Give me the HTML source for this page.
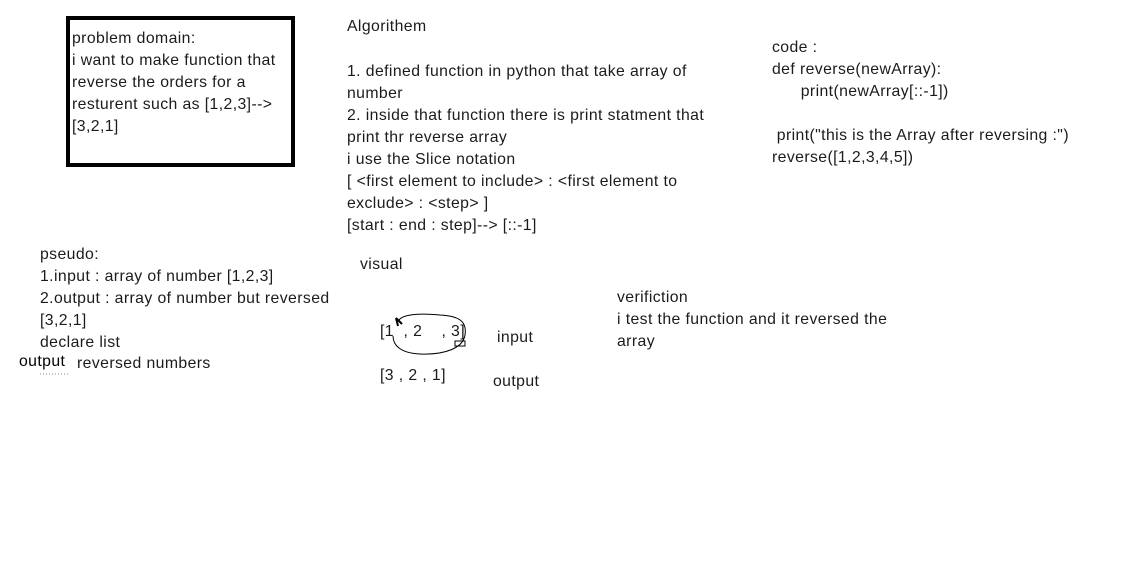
<!DOCTYPE html>
<html><head><style>
body{margin:0;width:1124px;height:580px;background:#fff;position:relative;overflow:hidden;font-family:"Liberation Sans",sans-serif;font-size:15.8px;letter-spacing:0.4px;color:#1b1b1b;}
.t{position:absolute;line-height:22px;white-space:pre;}
.box{position:absolute;left:66px;top:16px;width:221px;height:143px;border:4px solid #000;}
</style></head><body>
<div class="box"></div>
<div class="t" style="left:72px;top:28px">problem domain:
i want to make function that
reverse the orders for a
resturent such as [1,2,3]--&gt;
[3,2,1]</div>
<div class="t" style="left:347px;top:16px">Algorithem</div>
<div class="t" style="left:347px;top:61px">1. defined function in python that take array of
number
2. inside that function there is print statment that
print thr reverse array
i use the Slice notation
[ &lt;first element to include&gt; : &lt;first element to
exclude&gt; : &lt;step&gt; ]
[start : end : step]--&gt; [::-1]</div>
<div class="t" style="left:772px;top:37px">code :
def reverse(newArray):
      print(newArray[::-1])

 print("this is the Array after reversing :")
reverse([1,2,3,4,5])</div>
<div class="t" style="left:40px;top:244px">pseudo:
1.input : array of number [1,2,3]
2.output : array of number but reversed
[3,2,1]
declare list</div>
<div class="t" style="left:77px;top:353px">reversed numbers</div>
<div class="t" style="left:19px;top:351px;color:#000">output</div>
<div class="t" style="left:360px;top:254px">visual</div>
<div class="t" style="left:380px;top:321px">[1  , 2    , 3]</div>
<div class="t" style="left:497px;top:327px">input</div>
<div class="t" style="left:380px;top:365px">[3 , 2 , 1]</div>
<div class="t" style="left:493px;top:371px">output</div>
<div class="t" style="left:617px;top:287px">verifiction
i test the function and it reversed the
array</div>
<svg style="position:absolute;left:0;top:0" width="1124" height="580">
<path d="M398,322 C400,314 420,313 440,315 C460,316 467,322 465,335 C463,348 445,355 420,354 C400,353 393,345 393,336" fill="none" stroke="#000" stroke-width="1"/>
<path d="M396,318 L402,324 M396,318 L398,326" stroke="#000" stroke-width="2"/>
<rect x="455" y="341" width="10" height="5" fill="none" stroke="#000" stroke-width="1"/>
<path d="M40,374 H70" stroke="#888" stroke-width="1" stroke-dasharray="1,2"/>
</svg>
</body></html>
